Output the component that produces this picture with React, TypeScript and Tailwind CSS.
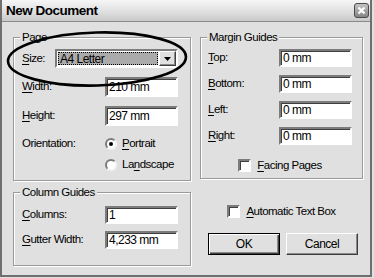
const font = { fontFamily: '"Liberation Sans", Arial, sans-serif' }

function Key({ k, rest, pre = '' }: { k: string; rest: string; pre?: string }) {
  return (
    <span>
      {pre}
      <u className="underline underline-offset-[2px]">{k}</u>
      {rest}
    </span>
  )
}

function Field({ value, h = 'h-[18px]' }: { value: string; h?: string }) {
  return (
    <div
      className={`${h} w-[73px] bg-white border-2 border-t-[#7c7c7c] border-l-[#7c7c7c] border-b-white border-r-white shadow-[inset_1px_1px_0_#3f3f3f] flex items-center pl-[2px] leading-none text-[12px]`}
    >
      {value}
    </div>
  )
}

function Row({ label, children, h, mt }: { label: React.ReactNode; children: React.ReactNode; h: string; mt: string }) {
  return (
    <div className={`flex items-center justify-between ${h} ${mt}`}>
      <span className="leading-none">{label}</span>
      {children}
    </div>
  )
}

function Group({ title, className, children }: { title: string; className: string; children: React.ReactNode }) {
  return (
    <div
      className={`relative border border-[#9a9a9a] shadow-[inset_1px_1px_0_#fff,1px_1px_0_#fff] ${className}`}
    >
      <span className="absolute -top-[7px] left-[6px] px-[2px] bg-[#e0e0e0] leading-[13px]">{title}</span>
      {children}
    </div>
  )
}

function Radio({ checked, label }: { checked?: boolean; label: React.ReactNode }) {
  return (
    <div className="flex items-center gap-[5px] leading-none">
      <span className="w-[12px] h-[12px] rounded-full bg-white border-2 border-t-[#7c7c7c] border-l-[#7c7c7c] border-b-[#f4f4f4] border-r-[#f4f4f4] flex items-center justify-center">
        {checked && <span className="w-[4px] h-[4px] rounded-full bg-black" />}
      </span>
      {label}
    </div>
  )
}

function Check({ label }: { label: React.ReactNode }) {
  return (
    <div className="flex items-center justify-center gap-[6px] leading-none">
      <span className="w-[13px] h-[13px] bg-white border-2 border-t-[#7c7c7c] border-l-[#7c7c7c] border-b-white border-r-white shadow-[inset_1px_1px_0_#3f3f3f]" />
      {label}
    </div>
  )
}

export default function App() {
  return (
    <div
      className="relative w-[374px] h-[278px] bg-[#e0e0e0] text-[11.5px] tracking-[-0.5px] text-black overflow-hidden"
      style={font}
    >
      <div className="w-[372px] h-[277px] border-x-2 border-b-2 border-[#6f6f6f]">
        {/* title bar */}
        <div className="h-[22px] flex items-center justify-between pl-[4px] pr-[1px] bg-gradient-to-b from-[#f6f6f6] via-[#e2e2e2] to-[#c9c9c9] border-b border-[#8a8a8a]">
          <span className="font-bold text-[13.5px] leading-none">New Document</span>
          <div className="w-[15px] h-[15px] rounded-[3px] border border-[#4a4a4a] bg-gradient-to-b from-[#c4c4c4] to-[#858585] flex items-center justify-center">
            <svg width="9" height="9" viewBox="0 0 9 9">
              <path d="M1.5 1.5 L7.5 7.5 M7.5 1.5 L1.5 7.5" stroke="#fff" strokeWidth="2.2" />
            </svg>
          </div>
        </div>

        <div className="flex pt-[15px] pl-[11px]">
          {/* left column */}
          <div className="w-[178px]">
            <Group title="Page" className="h-[144px] pt-[11px] pl-[8px] pr-[12px]">
              <Row label={<Key k="S" rest="ize:" />} h="h-[19px]" mt="mt-0">
                <div className="w-[123px] h-[19px] bg-white border-2 border-t-[#7c7c7c] border-l-[#7c7c7c] border-b-white border-r-white flex">
                  <div className="flex-1 m-[1px] bg-[#ababab] border border-dotted border-black flex items-center pl-[1px] leading-none text-[12px]">
                    A4 Letter
                  </div>
                  <div className="w-[17px] bg-[#e0e0e0] border border-t-white border-l-white border-b-[#3f3f3f] border-r-[#3f3f3f] shadow-[inset_-1px_-1px_0_#8a8a8a] flex items-center justify-center">
                    <svg width="7" height="4" viewBox="0 0 7 4">
                      <path d="M0 0 H7 L3.5 4 Z" fill="#000" />
                    </svg>
                  </div>
                </div>
              </Row>
              <Row label={<Key k="W" rest="idth:" />} h="h-[20px]" mt="mt-[9px]">
                <Field value="210 mm" h="h-[20px]" />
              </Row>
              <Row label={<Key k="H" rest="eight:" />} h="h-[20px]" mt="mt-[9px]">
                <Field value="297 mm" h="h-[20px]" />
              </Row>
              <div className="flex items-center h-[16px] mt-[10px]">
                <span className="w-[83px] leading-none">Orientation:</span>
                <Radio checked label={<Key k="P" rest="ortrait" />} />
              </div>
              <div className="flex items-center h-[16px] mt-[5px] pl-[83px]">
                <Radio label={<Key pre="La" k="n" rest="dscape" />} />
              </div>
            </Group>

            <Group title="Column Guides" className="h-[74px] mt-[11px] pt-[13px] pl-[8px] pr-[12px]">
              <Row label={<Key k="C" rest="olumns:" />} h="h-[18px]" mt="mt-0">
                <Field value="1" />
              </Row>
              <Row label={<Key k="G" rest="utter Width:" />} h="h-[18px]" mt="mt-[7px]">
                <Field value="4,233 mm" />
              </Row>
            </Group>
          </div>

          {/* right column */}
          <div className="w-[163px] ml-[9px]">
            <Group title="Margin Guides" className="h-[142px] pt-[11px] pl-[7px] pr-[10px]">
              <Row label={<Key k="T" rest="op:" />} h="h-[18px]" mt="mt-0">
                <Field value="0 mm" />
              </Row>
              <Row label={<Key k="B" rest="ottom:" />} h="h-[18px]" mt="mt-[8px]">
                <Field value="0 mm" />
              </Row>
              <Row label={<Key k="L" rest="eft:" />} h="h-[18px]" mt="mt-[8px]">
                <Field value="0 mm" />
              </Row>
              <Row label={<Key k="R" rest="ight:" />} h="h-[18px]" mt="mt-[8px]">
                <Field value="0 mm" />
              </Row>
              <div className="mt-[14px]">
                <Check label={<Key k="F" rest="acing Pages" />} />
              </div>
            </Group>

            <div className="mt-[26px]">
              <Check label={<Key k="A" rest="utomatic Text Box" />} />
            </div>

            <div className="flex gap-[6px] mt-[15px] pl-[8px]">
              <button className="w-[72px] h-[22px] border border-black bg-[#e0e0e0] shadow-[inset_1px_1px_0_#fff,inset_-1px_-1px_0_#3f3f3f,inset_-2px_-2px_0_#8a8a8a] leading-none text-[12px]">
                OK
              </button>
              <button className="w-[72px] h-[22px] bg-[#e0e0e0] border border-t-white border-l-white border-b-[#3f3f3f] border-r-[#3f3f3f] shadow-[inset_-1px_-1px_0_#8a8a8a] leading-none text-[12px]">
                Cancel
              </button>
            </div>
          </div>
        </div>
      </div>

      {/* hand-drawn highlight around the Size field */}
      <svg className="absolute inset-0 pointer-events-none" width="374" height="278">
        <ellipse cx="97" cy="59" rx="89" ry="26.5" fill="none" stroke="#000" strokeWidth="2.6" transform="rotate(-1.5 97 59)" />
      </svg>
    </div>
  )
}
